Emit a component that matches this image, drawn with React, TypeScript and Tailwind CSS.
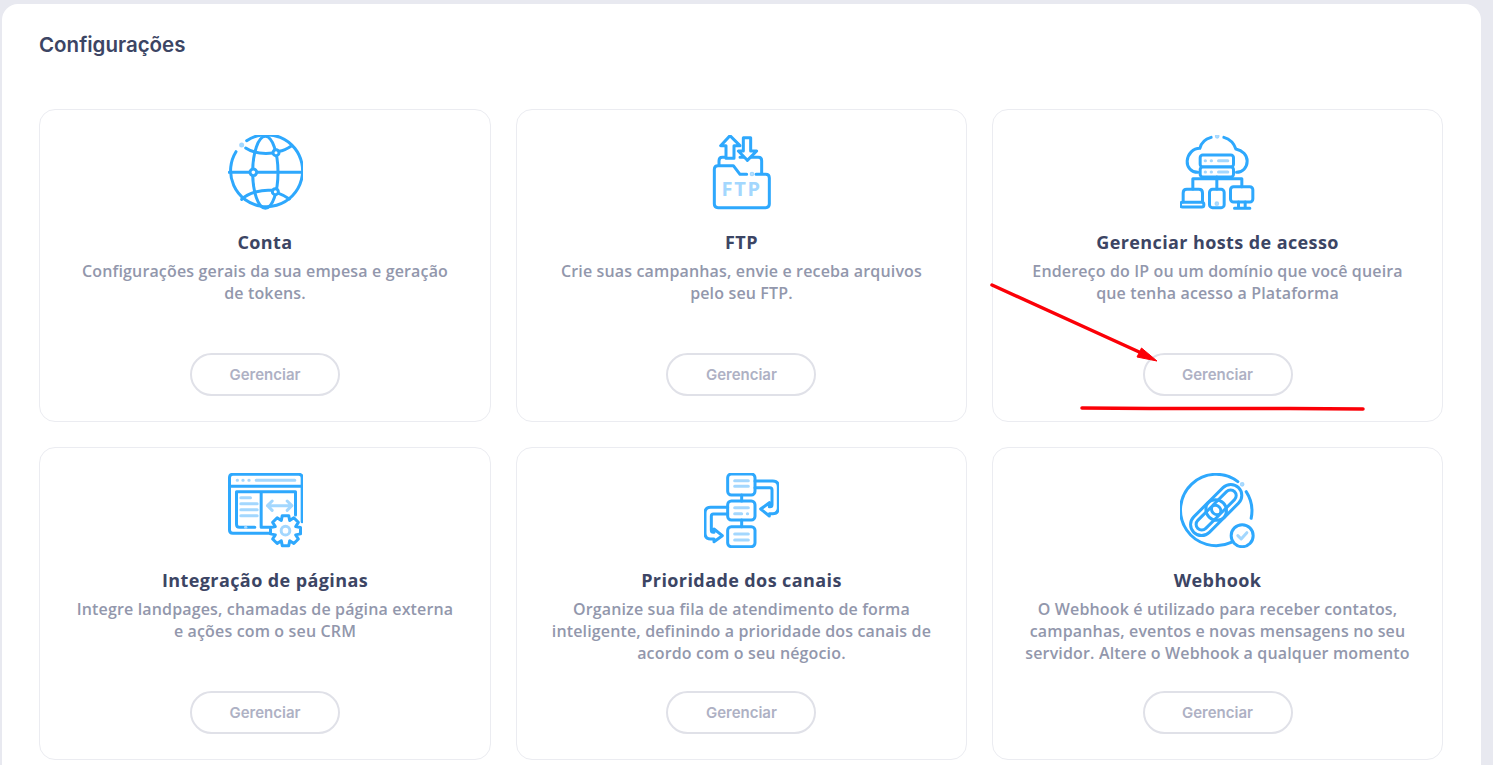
import React from "react";

const BLUE = "#2ea8fd";
const LIGHT = "#a3d7fe";

// icones desenhados em coordenadas de 225x225 (75px na tela)
const Icon: React.FC<{ box: string; children: React.ReactNode }> = ({ box, children }) => (
  <svg
    viewBox={box}
    className="w-[75px] h-[75px] shrink-0"
    fill="none"
    stroke={BLUE}
    strokeWidth="9"
    strokeLinecap="round"
    strokeLinejoin="round"
  >
    {children}
  </svg>
);

const GlobeIcon = () => (
  <Icon box="84 45 225 225">
    <path d="M140 62 A108 108 0 1 1 108 95" />
    <circle cx="125" cy="75" r="3" fill={LIGHT} stroke={LIGHT} />
    <ellipse cx="196" cy="157" rx="38" ry="108" />
    <path d="M88 157 H304" />
    <path d="M137 84 C160 100 190 102 219 99 M237 94 C250 92 262 86 274 78" />
    <path d="M125 238 C145 218 185 208 216 211 M236 220 C248 224 258 230 268 237" />
    <circle cx="228" cy="98" r="9" fill="#fff" />
    <circle cx="160" cy="157" r="10" fill="#fff" />
    <circle cx="226" cy="215" r="9" fill="#fff" />
  </Icon>
);

const FtpIcon = () => (
  <Icon box="42 30 225 225">
    <path d="M87 120 V108 Q87 97 97 97 H107" />
    <path d="M150 97 H205 Q215 97 215 107 V146" />
    <path d="M120 32 L92 62 H108 V100 H132 V62 H150 Z" fill="#fff" />
    <path d="M160 38 H182 V78 H200 L172 106 L145 78 H160 Z" fill="#fff" />
    <path d="M170 148 H150 L130 122 H84 Q73 122 73 133 V237 Q73 248 84 248 H227 Q238 248 238 237 V159 Q238 148 227 148 H198" fill="#fff" />
    <circle cx="186" cy="147" r="2.5" fill={LIGHT} stroke={LIGHT} />
    <text x="155" y="214" textAnchor="middle" fill={LIGHT} stroke="none" fontSize="60" fontWeight="700" letterSpacing="5" fontFamily="'Open Sans', sans-serif">
      FTP
    </text>
  </Icon>
);

const HostsIcon = () => (
  <Icon box="46.5 30 225 225">
    <path d="M140 37 C122 42 110 52 106 70 C86 70 70 86 68 108 C67 126 80 142 100 142" />
    <path d="M178 37 C196 42 208 54 214 72 C234 76 248 90 248 108 C248 128 234 142 216 142" />
    <circle cx="158" cy="34" r="2.5" fill={LIGHT} stroke={LIGHT} />
    <rect x="107" y="90" width="100" height="36" rx="8" fill="#fff" />
    <rect x="107" y="126" width="100" height="30" rx="8" fill="#fff" />
    <g stroke={LIGHT}>
      <path d="M122 107 H123 M140 107 H141 M162 107 H190 M122 141 H123 M140 141 H141 M162 141 H190" />
    </g>
    <path d="M157 156 V192 M85 192 V161 H232 V185" />
    <path d="M56 230 V204 Q56 193 67 193 H103 Q114 193 114 204 V230" />
    <rect x="48" y="232" width="70" height="14" rx="6" />
    <rect x="135" y="193" width="44" height="55" rx="9" />
    <circle cx="157" cy="236" r="2.5" fill={LIGHT} stroke={LIGHT} />
    <rect x="198" y="185" width="67" height="46" rx="9" />
    <path d="M222 231 V250 M242 231 V250 M210 250 H256" />
  </Icon>
);

const gearPath = (cx: number, cy: number, outer: number, inner: number, teeth: number) => {
  const pts: string[] = [];
  const step = (Math.PI * 2) / teeth;
  for (let i = 0; i < teeth; i++) {
    const a = i * step - Math.PI / 2;
    [
      [inner, -0.5],
      [outer, -0.27],
      [outer, 0.27],
      [inner, 0.5],
    ].forEach(([r, k]) => {
      const t = a + k * step;
      pts.push(`${(cx + r * Math.cos(t)).toFixed(1)} ${(cy + r * Math.sin(t)).toFixed(1)}`);
    });
  }
  return `M${pts.join(" L")} Z`;
};

const IntegrationIcon = () => (
  <Icon box="37.5 24 225 225">
    <path d="M165 205 H52 Q42 205 42 195 V38 Q42 28 52 28 H250 Q260 28 260 38 V170" />
    <path d="M42 64 H260" />
    <path d="M118 187 H72 Q63 187 63 178 V80 H240 V150 M137 80 V187 H165" />
    <g stroke={LIGHT}>
      <path d="M65 46 H66 M82 46 H83 M100 46 H101 M122 46 H238" />
      <path d="M76 98 H105 M76 116 H125 M76 134 H125 M76 152 H125" />
      <path d="M90 187 H91" />
      <path d="M156 122 H229 M170 108 L156 122 L170 136 M215 108 L229 122 L215 136" />
    </g>
    <path d={gearPath(210, 197, 46, 33, 8)} fill="#fff" />
    <circle cx="210" cy="197" r="13" stroke={LIGHT} />
  </Icon>
);

const PriorityIcon = () => (
  <Icon box="42 24 225 225">
    <path d="M155 90 V108 M155 165 V185" />
    <rect x="113" y="27" width="82" height="63" rx="11" />
    <rect x="113" y="108" width="82" height="57" rx="11" />
    <rect x="113" y="185" width="82" height="60" rx="11" />
    <path d="M195 48 H248 Q265 48 265 65 V128 Q265 146 248 146 H238 V153 L212 132 L238 113 V125 H240 Q246 125 246 119 V75 Q246 68 240 68 H195" />
    <path d="M113 127 H62 Q45 127 45 144 V205 Q45 222 62 222 H72 V230 L97 212 L72 192 V202 H70 Q64 202 64 196 V153 Q64 147 70 147 H113" />
    <g stroke={LIGHT}>
      <path d="M134 47 H175 M134 64 H175" />
      <path d="M134 128 H175 M134 146 H155 M172 146 H173" />
      <path d="M134 207 H175 M134 225 H175" />
    </g>
  </Icon>
);

const WebhookIcon = () => (
  <Icon box="46.5 24 225 225">
    <path d="M220 50 A107 107 0 1 0 200 232" />
    <path d="M245 80 A107 107 0 0 1 260 160" />
    <circle cx="233" cy="58" r="2.500" fill={LIGHT} stroke={LIGHT} />
    <g transform="rotate(-45 155 135)">
      <rect x="60" y="102" width="125" height="66" rx="33" />
      <rect x="77" y="118" width="91" height="34" rx="17" />
      <rect x="125" y="102" width="125" height="66" rx="33" />
      <rect x="142" y="118" width="91" height="34" rx="17" />
    </g>
    <circle cx="233" cy="212" r="33" fill="#fff" />
    <path d="M220 212 L230 222 L247 203" stroke={LIGHT} />
  </Icon>
);

const cards = [
  { id: "conta", title: "Conta", text: "Configurações gerais da sua empesa e geração de tokens.", icon: <GlobeIcon /> },
  { id: "ftp", title: "FTP", text: "Crie suas campanhas, envie e receba arquivos pelo seu FTP.", icon: <FtpIcon /> },
  { id: "hosts", title: "Gerenciar hosts de acesso", text: "Endereço do IP ou um domínio que você queira que tenha acesso a Plataforma", icon: <HostsIcon /> },
  { id: "paginas", title: "Integração de páginas", text: "Integre landpages, chamadas de página externa e ações com o seu CRM", icon: <IntegrationIcon /> },
  { id: "canais", title: "Prioridade dos canais", text: "Organize sua fila de atendimento de forma inteligente, definindo a prioridade dos canais de acordo com o seu négocio.", icon: <PriorityIcon /> },
  { id: "webhook", title: "Webhook", text: "O Webhook é utilizado para receber contatos, campanhas, eventos e novas mensagens no seu servidor. Altere o Webhook a qualquer momento", icon: <WebhookIcon /> },
];

export default function App() {
  return (
    <div className="relative h-[765px] overflow-hidden bg-[#e8e9f0] pt-1 pl-[2px] pr-3 font-['Open_Sans',sans-serif]">
      <div className="h-[800px] rounded-t-2xl bg-white px-[37px] pt-[29px]">
        <h1 className="font-['Inter',sans-serif] text-[20.5px] leading-6 font-semibold text-[#3c4564]">Configurações</h1>

        <div className="mt-[52px] grid grid-cols-[452px_450.9px_451.3px] gap-[25px]">
          {cards.map((card) => (
            <div key={card.id} className="flex h-[313px] flex-col items-center rounded-2xl border border-[#ebecf1] pt-[25px] pb-[25px]">
              {card.icon}
              <h2 className="mt-[20px] text-[18px] leading-6 font-bold tracking-[0.4px] text-[#3c4564]">{card.title}</h2>
              <p className="mt-[6px] max-w-[387px] text-center text-[16px] leading-[22px] font-semibold tracking-[0.15px] text-[#9297ac]">{card.text}</p>
              <button className="mt-auto h-[43px] w-[150px] rounded-full border-2 border-[#e0e1e8] bg-white pt-[1px] font-['Inter',sans-serif] text-[15px] font-semibold text-[#aeb1c4]">
                Gerenciar
              </button>
            </div>
          ))}
        </div>
      </div>

      {/* marcacoes em vermelho por cima da tela */}
      <svg className="pointer-events-none absolute inset-0 h-full w-full" viewBox="0 0 1493 765" fill="none">
        <path d="M992 285 L1148 356" stroke="#fb0007" strokeWidth="3.500" strokeLinecap="round" />
        <path d="M1157 361 L1141.500 348 L1137 357 Z" fill="#fb0007" stroke="#fb0007" />
        <path d="M1082 408 L1150 408.500 L1290 408.500 L1363 409" stroke="#fb0007" strokeWidth="3.500" strokeLinecap="round" />
      </svg>
    </div>
  );
}
